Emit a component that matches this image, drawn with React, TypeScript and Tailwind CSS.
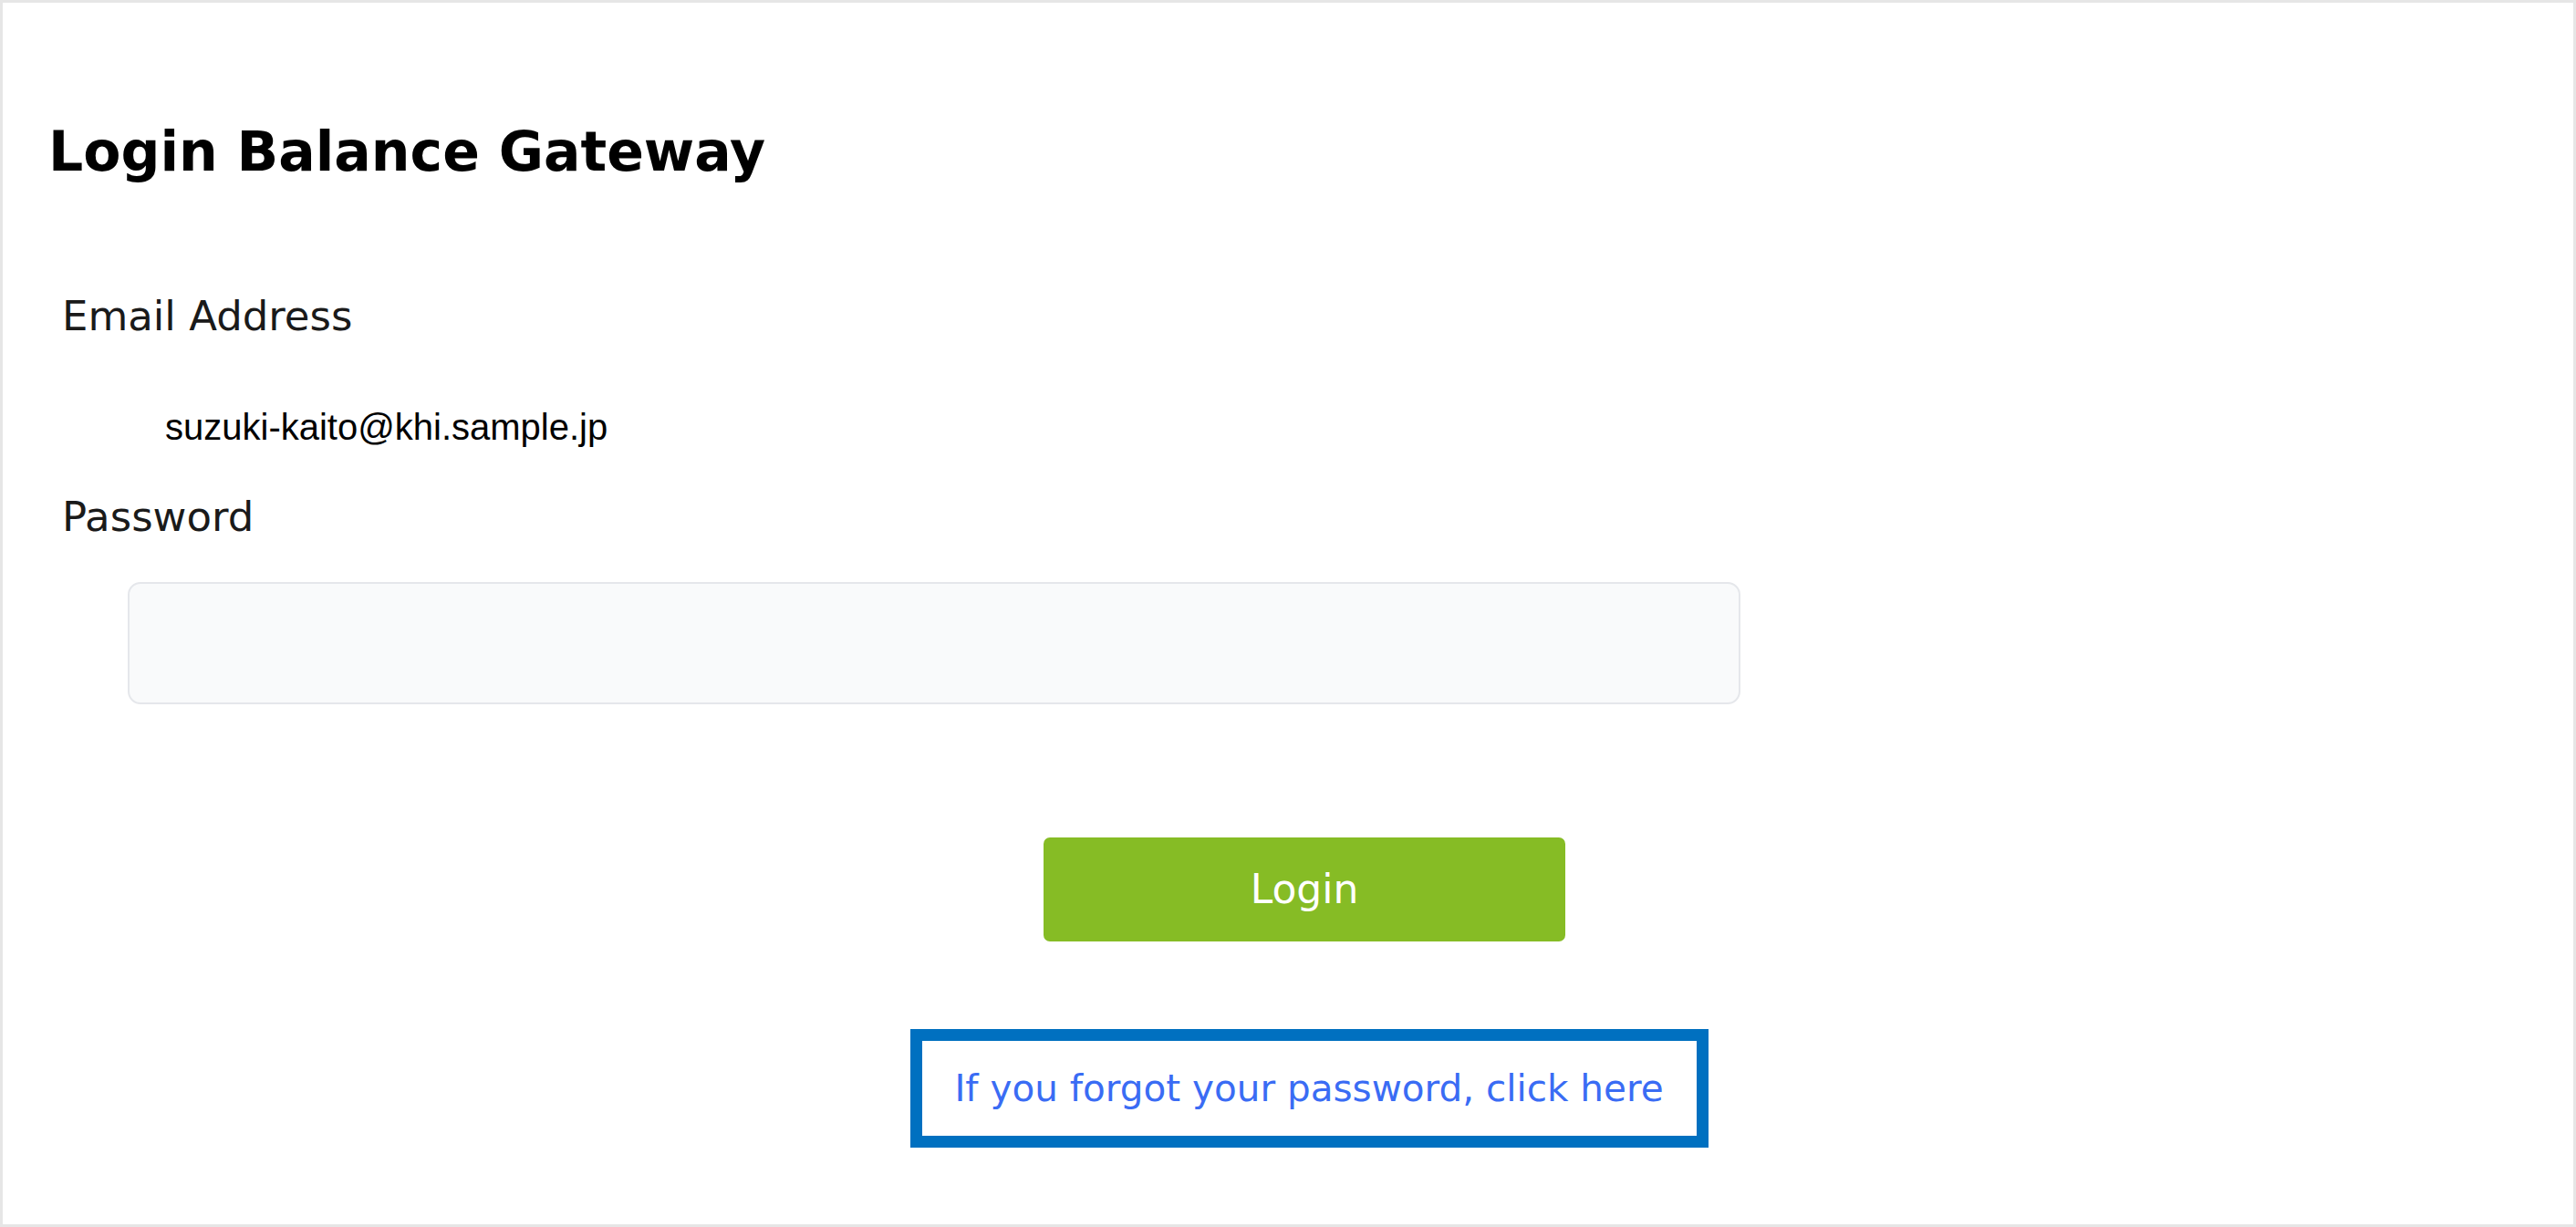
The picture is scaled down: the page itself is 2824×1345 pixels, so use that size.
const verdana = "font-['DejaVu_Sans',Verdana,sans-serif]";

const App = () => {
    return (
        <div className="box-border h-[1345px] w-full border-[3px] border-[#e6e6e6] bg-white">
            <h1 className={`${verdana} ml-[50px] pt-[133px] text-[60px] leading-[60px] font-bold text-black`}>
                Login Balance Gateway
            </h1>

            <div className={`${verdana} mt-[128px] ml-[65px] text-[45px] leading-[45px] text-[#1a1a1a]`}>Email Address</div>
            <div className="mt-[79px] ml-[178px] font-['Liberation_Sans',Arial,sans-serif] text-[40px] leading-[40px] text-black">
                suzuki-kaito@khi.sample.jp
            </div>

            <div className={`${verdana} mt-[56px] ml-[65px] text-[45px] leading-[45px] text-[#1a1a1a]`}>Password</div>
            <input
                type="password"
                className="mt-[49px] ml-[137px] box-border block h-[134px] w-[1768px] rounded-[14px] border-2 border-[#e5e7eb] bg-[#f9fafb] outline-none"
            />

            <div className="flex flex-col items-center pl-[36px]">
                <button
                    className={`${verdana} mt-[146px] h-[114px] w-[572px] rounded-[7px] bg-[#86bc25] text-[44px] leading-[44px] text-white`}
                >
                    Login
                </button>
                <div className="mt-[96px] ml-[10px] box-border flex h-[130px] w-[875px] items-center justify-center border-[13px] border-[#0070c0] bg-white">
                    <a href="#" className={`${verdana} text-[40.5px] leading-[41px] text-[#3a6cf4]`}>
                        If you forgot your password, click here
                    </a>
                </div>
            </div>
        </div>
    );
};

export default App;
